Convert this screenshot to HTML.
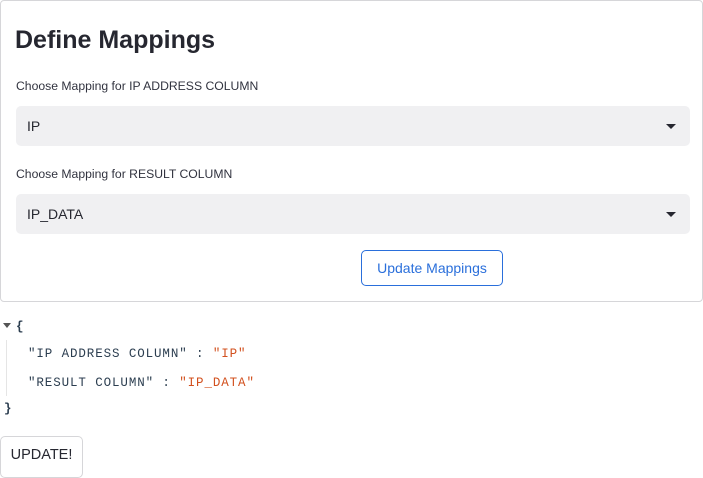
<!DOCTYPE html>
<html><head><style>
body{margin:0;width:703px;height:469px;overflow:hidden;background:#fff;font-family:"Liberation Sans",sans-serif;color:#262730;position:relative}
.card{position:absolute;left:0;top:0;width:701px;height:300px;border:1px solid #d6d6d9;border-radius:4px}
h1{position:absolute;left:15px;top:26px;margin:0;font-size:25px;font-weight:bold;color:#262730}
.lbl{position:absolute;left:16px;font-size:12.2px;color:#31333f}
.sel{position:absolute;left:16px;width:674px;height:40px;background:#f0f0f2;border-radius:5px;font-size:14px;line-height:40px}
.sel span{position:absolute;left:11px}
.sel i{position:absolute;right:14px;top:18px;border-left:5px solid transparent;border-right:5px solid transparent;border-top:5px solid #262730}
.btn{position:absolute;left:361px;top:250px;width:140px;height:34px;border:1px solid #2a6fdb;border-radius:5px;color:#2a6fdb;font-size:14px;text-align:center;line-height:34px}
.json{position:absolute;font-family:"Liberation Mono",monospace;font-size:12.5px;letter-spacing:0.9px;color:#2c3e50}
.s{color:#d2501e}
.up{position:absolute;left:0;top:436px;width:81px;height:40px;border:1px solid #d6d6d9;border-radius:5px;font-size:14.5px;line-height:36px;text-align:center}
</style></head><body>
<div class="card"></div>
<h1>Define Mappings</h1>
<div class="lbl" style="top:79px">Choose Mapping for IP ADDRESS COLUMN</div>
<div class="sel" style="top:106px"><span>IP</span><i></i></div>
<div class="lbl" style="top:167px">Choose Mapping for RESULT COLUMN</div>
<div class="sel" style="top:194px"><span>IP_DATA</span><i></i></div>
<div class="btn">Update Mappings</div>
<div style="position:absolute;left:3px;top:323px;border-left:4px solid transparent;border-right:4px solid transparent;border-top:5px solid #555"></div>
<div class="json" style="left:16px;top:320px;font-weight:bold">{</div>
<div style="position:absolute;left:6px;top:340px;width:1px;height:56px;background:#e5e5e5"></div>
<div class="json" style="left:28px;top:347px">"IP ADDRESS COLUMN" : <span class="s">"IP"</span></div>
<div class="json" style="left:28px;top:376px">"RESULT COLUMN" : <span class="s">"IP_DATA"</span></div>
<div class="json" style="left:4px;top:402px;font-weight:bold">}</div>
<div class="up">UPDATE!</div>
</body></html>
